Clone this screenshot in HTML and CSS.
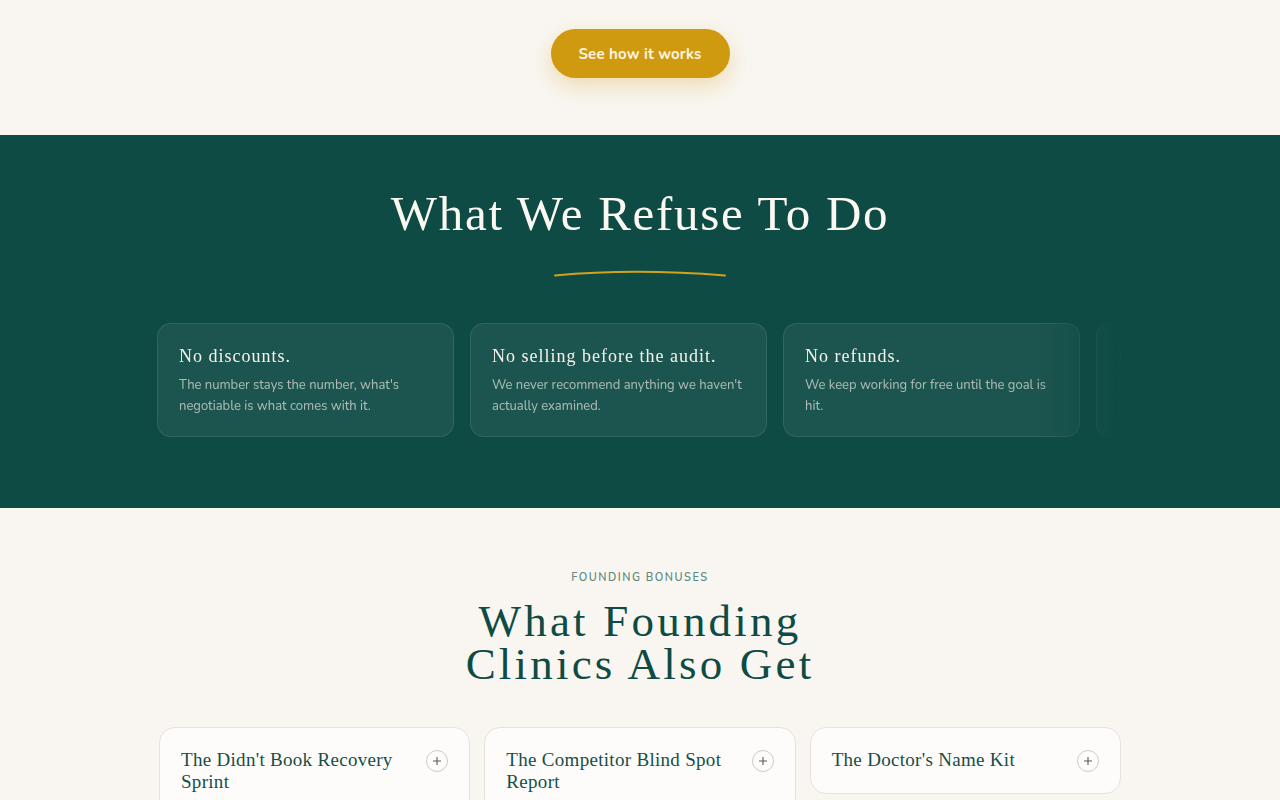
FILE: index.html
```html
<!DOCTYPE html>
<html lang="en">
<head>
<meta charset="utf-8">
<title>Founding Clinics</title>
<link rel="stylesheet" href="styles.css">
</head>
<body>
<section class="hero-end">
  <a class="btn-gold" href="#how">See how it works</a>
</section>

<section class="refuse">
  <h2 class="refuse-title">What We Refuse To Do</h2>
  <svg class="swoosh" width="172" height="10" viewBox="0 0 172 10" aria-hidden="true">
    <path d="M1 7.5 Q 80 0 171 7.5" fill="none" stroke="#d4a21a" stroke-width="2" stroke-linecap="round"/>
  </svg>
  <div class="carousel">
    <div class="track">
      <div class="rcard">
        <h3>No discounts.</h3>
        <p>The number stays the number, what's negotiable is what comes with it.</p>
      </div>
      <div class="rcard">
        <h3>No selling before the audit.</h3>
        <p>We never recommend anything we haven't actually examined.</p>
      </div>
      <div class="rcard">
        <h3>No refunds.</h3>
        <p>We keep working for free until the goal is hit.</p>
      </div>
      <div class="rcard">
        <h3>No long contracts.</h3>
        <p>Stay because it works, not because you signed.</p>
      </div>
    </div>
  </div>
</section>

<section class="bonuses">
  <div class="eyebrow">FOUNDING BONUSES</div>
  <h2 class="bonus-title">What Founding<br>Clinics Also Get</h2>
  <div class="bgrid">
    <div class="bcard">
      <h3>The Didn't Book Recovery Sprint</h3>
      <span class="plus"><svg width="10" height="10" viewBox="0 0 10 10" aria-hidden="true"><path d="M5 1v8M1 5h8" stroke="#5a5a5a" stroke-width="1.1"/></svg></span>
    </div>
    <div class="bcard">
      <h3>The Competitor Blind Spot Report</h3>
      <span class="plus"><svg width="10" height="10" viewBox="0 0 10 10" aria-hidden="true"><path d="M5 1v8M1 5h8" stroke="#5a5a5a" stroke-width="1.1"/></svg></span>
    </div>
    <div class="bcard">
      <h3>The Doctor's Name Kit</h3>
      <span class="plus"><svg width="10" height="10" viewBox="0 0 10 10" aria-hidden="true"><path d="M5 1v8M1 5h8" stroke="#5a5a5a" stroke-width="1.1"/></svg></span>
    </div>
  </div>
</section>
</body>
</html>
```

FILE: styles.css
```css
* { box-sizing: border-box; }
html, body { margin: 0; padding: 0; }
body {
  background: #f9f6f1;
  font-family: "Nunito", Lato, "Open Sans", sans-serif;
  color: #0e4b44;
  overflow: hidden;
}
h2, h3 { margin: 0; font-weight: 400; }

.hero-end {
  height: 135px;
  display: flex;
  justify-content: center;
  padding-top: 29px;
}
.btn-gold {
  display: inline-flex;
  align-items: center;
  justify-content: center;
  width: 179px;
  height: 49px;
  border-radius: 999px;
  background: #cf9a10;
  color: #fdf5e2;
  font-weight: 700;
  font-size: 15px;
  letter-spacing: 0.2px;
  text-decoration: none;
  box-shadow: 0 8px 22px rgba(207, 154, 16, 0.28);
}

.refuse {
  background: #0e4b44;
  height: 373px;
  display: flex;
  flex-direction: column;
  align-items: center;
}
.refuse-title {
  font-family: "Liberation Serif", "Times New Roman", serif;
  color: #fbf8f2;
  font-size: 49px;
  letter-spacing: 1.7px;
  line-height: 60px;
  margin-top: 49px;
}
.swoosh { margin-top: 24px; display: block; }

.carousel {
  width: 966px;
  margin-top: 45px;
  overflow: hidden;
  -webkit-mask-image: linear-gradient(to right, #000 0, #000 880px, transparent 966px);
  mask-image: linear-gradient(to right, #000 0, #000 880px, transparent 966px);
}
.track {
  display: flex;
  gap: 16px;
}
.rcard {
  flex: 0 0 297px;
  height: 114px;
  border-radius: 14px;
  background: rgba(255, 255, 255, 0.06);
  border: 1px solid rgba(255, 255, 255, 0.1);
  padding: 20px 21px;
}
.rcard h3 {
  font-family: "Liberation Serif", "Times New Roman", serif;
  color: #f6f3ec;
  font-size: 18px;
  letter-spacing: 1px;
  line-height: 24px;
}
.rcard p {
  margin: 7px 0 0;
  font-size: 13px;
  line-height: 20.5px;
  color: rgba(240, 236, 228, 0.68);
}

.bonuses {
  display: flex;
  flex-direction: column;
  align-items: center;
  padding-top: 63px;
}
.eyebrow {
  font-size: 11px;
  font-weight: 600;
  letter-spacing: 1.5px;
  color: #5e8a80;
  line-height: 14px;
}
.bonus-title {
  font-family: "Liberation Serif", "Times New Roman", serif;
  font-size: 45px;
  line-height: 43px;
  letter-spacing: 3.2px;
  text-align: center;
  color: #0e4b44;
  margin-top: 15px;
}
.bgrid {
  width: 962px;
  margin-top: 41px;
  display: grid;
  grid-template-columns: repeat(3, 1fr);
  gap: 14px;
  align-items: start;
}
.bcard {
  background: #fdfcfa;
  border: 1px solid #e8e3da;
  border-radius: 16px;
  padding: 21px;
  display: flex;
  justify-content: space-between;
  align-items: flex-start;
  gap: 16px;
}
.bcard h3 {
  font-family: "Liberation Serif", "Times New Roman", serif;
  font-size: 19px;
  line-height: 22px;
  letter-spacing: 0.3px;
  color: #174e47;
}
.plus {
  flex: 0 0 22px;
  width: 22px;
  height: 22px;
  border-radius: 50%;
  border: 1px solid #cfccc6;
  display: flex;
  align-items: center;
  justify-content: center;
  margin-top: 1px;
}
.plus svg { display: block; }
```
